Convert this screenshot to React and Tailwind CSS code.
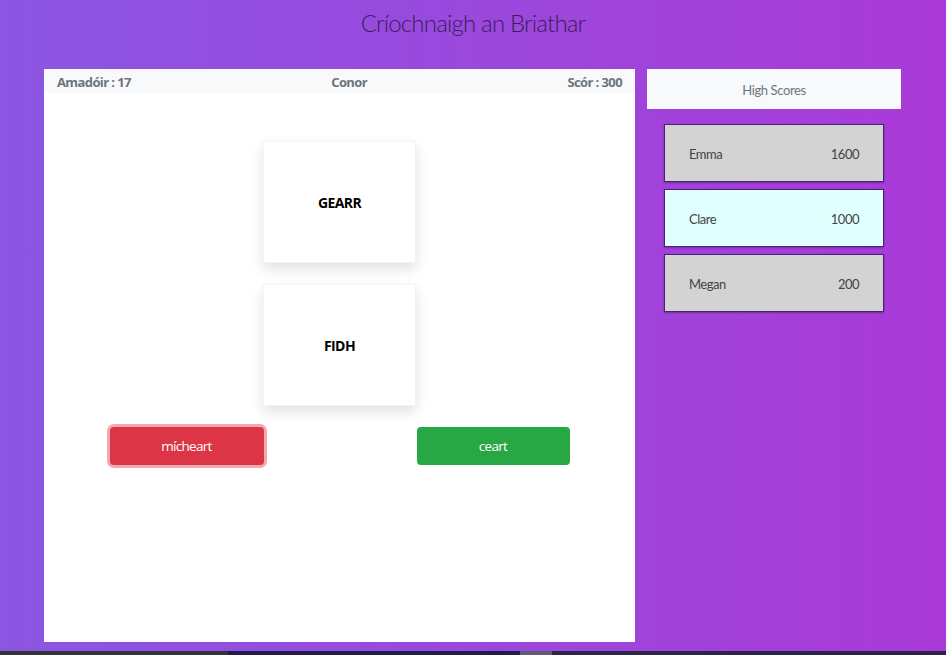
import { useState } from "react";

const scores = [
  { name: "Emma", score: 1600 },
  { name: "Clare", score: 1000, me: true },
  { name: "Megan", score: 200 },
];

const round = "font-['Lato','Noto_Sans',sans-serif]";
const narrow = "font-['Open_Sans',sans-serif]";

function WordCard({ word }) {
  return (
    <div className="w-[153px] h-[122px] bg-white border border-gray-100 shadow-[0_6px_12px_rgba(0,0,0,0.12)] flex items-center justify-center">
      <span className={`${narrow} font-bold text-[14px] tracking-[-0.6px] text-black`}>{word}</span>
    </div>
  );
}

export default function App() {
  const [game] = useState({ amadoir: 17, player: "Conor", score: 300 });

  return (
    <div className="w-full min-h-[655px] flex flex-col">
      <div className="flex-1 h-[651px] bg-[linear-gradient(to_right,#8b56e2,#aa3ad8)] flex flex-col">
        <h1 className={`${round} font-light text-[24px] text-[#3a1e5c] text-center pt-[5px] h-[69px] tracking-[-0.8px]`}>
          Críochnaigh an Briathar
        </h1>
        <div className="flex items-start">
          <main className="ml-[44px] w-[591px] h-[573px] bg-white">
            <div className={`${narrow} h-[24px] bg-[#f8f9fa] flex justify-between items-center pt-[3px] px-[13px] text-[13px] tracking-[-0.6px] font-bold text-[#6c757d]`}>
              <span>Amadóir : {game.amadoir}</span>
              <span>{game.player}</span>
              <span>Scór : {game.score}</span>
            </div>
            <div className="flex flex-col items-center pt-[48px] gap-[21px]">
              <WordCard word="GEARR" />
              <WordCard word="FIDH" />
            </div>
            <div className="flex justify-center gap-[153px] mt-[21px]">
              <button className={`${narrow} w-[154px] h-[38px] rounded bg-[#dc3545] text-white text-[13.5px] tracking-[-0.7px] shadow-[0_0_0_3px_rgba(225,83,97,0.5)]`}>
                mícheart
              </button>
              <button className={`${narrow} w-[153px] h-[38px] rounded bg-[#28a745] text-white text-[13.5px] tracking-[-0.7px]`}>
                ceart
              </button>
            </div>
          </main>
          <aside className="ml-[12px] w-[254px]">
            <div className={`${round} h-[40px] bg-[#f8f9fa] flex items-center justify-center pt-[3px] text-[13px] tracking-[-0.4px] text-[#6c757d]`}>
              High Scores
            </div>
            <div className="flex flex-col gap-[7px] mt-[15px] ml-[17px] w-[220px]">
              {scores.map((s) => (
                <div
                  key={s.name}
                  className={`${round} h-[58px] border border-[#4a2170] shadow-[0_1px_2px_rgba(0,0,0,0.3)] flex items-center justify-between pt-[3px] px-[24px] text-[13px] tracking-[-0.5px] text-[#444] ${s.me ? "bg-[#e0ffff]" : "bg-[#d3d3d3]"}`}
                >
                  <span>{s.name}</span>
                  <span>{s.score}</span>
                </div>
              ))}
            </div>
          </aside>
        </div>
      </div>
      <div className="h-[4px] flex">
        <div className="w-[228px] bg-[#35343a]" />
        <div className="w-[292px] bg-[#1f1c4a]" />
        <div className="w-[32px] bg-[#5e5a78]" />
        <div className="flex-1 bg-[#2b2547]" />
      </div>
    </div>
  );
}
